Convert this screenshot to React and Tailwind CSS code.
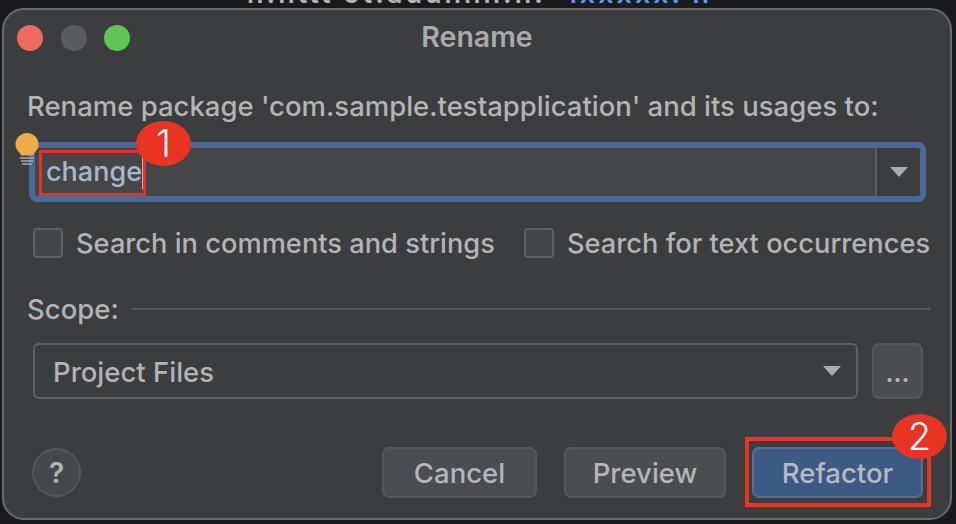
import React from 'react';

const font = "font-['Inter','Liberation_Sans',sans-serif]";

const Caret = () => (
    <svg width="20" height="12" viewBox="0 0 20 12" className="shrink-0">
        <path d="M1 1h18l-9 10z" fill="#a9abaf" />
    </svg>
);

const Bulb = () => (
    <svg width="24" height="33" viewBox="0 0 24 33" className="absolute left-[15px] top-[133px]">
        <path d="M12 0a11.5 11.5 0 0 1 11.5 11.5c0 4-2.2 6.4-4 8.2-.9.9-1.3 1.8-1.5 2.8H6c-.2-1-.6-1.900-1.500-2.800C2.700 17.900.5 15.500.5 11.500A11.500 11.500 0 0 1 12 0z" fill="#edaa45" />
        <path d="M5 25h14M6 28h12M7 31h10" stroke="#a9abaf" strokeWidth="1.500" />
    </svg>
);

const Badge = ({ children, className }) => (
    <div className={`absolute w-[55px] h-[45px] rounded-[50%] bg-[#e93323] text-white text-[38px] leading-[45px] font-light text-center ${className}`}>
        {children}
    </div>
);

const Check = ({ label }) => (
    <label className="flex items-center gap-[13px] h-[30px] leading-[30px] text-[27.25px]">
        <span className="w-[30px] h-[30px] rounded-[4px] border-2 border-[#5f6265] bg-[#424647]" />
        <span className="h-[30px] whitespace-nowrap pt-[1px]">{label}</span>
    </label>
);

const Btn = ({ children, className }) => (
    <button className={`h-[51px] rounded-[7px] border-2 border-[#55585b] bg-[#4b4e50] text-[#b4b6b8] ${className}`}>
        {children}
    </button>
);

const App = () => {
    return (
        <div className={`relative w-[956px] h-[524px] overflow-hidden bg-[#1b1b1d] pt-2 pl-[2px] pr-1 pb-1 text-[27.5px] font-medium text-[#b2b4b6] ${font}`}>
            <div className="absolute top-[-22px] left-[247px] flex w-[465px] justify-between text-[27px] leading-[32px] font-semibold text-[#b5b5b5] tracking-[3px] whitespace-nowrap">
                <span>n.nttt ot.auunnn.n:</span>
                <span className="text-[#5b9bf0]">ixxxxx. n</span>
            </div>

            <div className="relative h-full rounded-[22px] border-2 border-[#6a6b6d] bg-[#3c3d3f]">
                {/* title bar */}
                <div className="grid grid-cols-[1fr_auto_1fr] items-center h-[54px] px-[13px] pt-[1px]">
                    <div className="flex gap-[17.5px]">
                        <span className="w-[26px] h-[26px] rounded-full bg-[#ee6a5f]" />
                        <span className="w-[26px] h-[26px] rounded-full bg-[#5b5c5f]" />
                        <span className="w-[26px] h-[26px] rounded-full bg-[#60c554]" />
                    </div>
                    <div className="font-semibold text-[28.5px] text-[#a8aaac]">Rename</div>
                    <div />
                </div>

                <div className="pl-[23px] pr-[20px]">
                    <div className="mt-[26px] leading-[32px] whitespace-nowrap">Rename package 'com.sample.testapplication' and its usages to:</div>

                    {/* name input */}
                    <div className="flex items-stretch h-[60px] mt-[20px] ml-[2px] mr-[4px] rounded-[8px] border-[6px] border-[#4a6a98] bg-[#454648]">
                        <div className="flex-1 flex items-center pl-[11px] pt-[1px] text-[27px] text-[#a9b7c9]">
                            change<span className="w-[1px] h-[33px] bg-[#a9b7c9]" />
                        </div>
                        <div className="w-[45px] flex items-center justify-center border-l-2 border-[#5d5e60] bg-[#3c3d3f] rounded-r-[4px]">
                            <Caret />
                        </div>
                    </div>

                    <div className="flex items-center mt-[26px] ml-[6px] gap-[29px]">
                        <Check label="Search in comments and strings" />
                        <Check label="Search for text occurrences" />
                    </div>

                    <div className="flex items-center gap-[13px] mt-[35px] leading-[32px]">
                        <span>Scope:</span>
                        <span className="flex-1 h-[2px] bg-[#57585a]" />
                    </div>

                    <div className="flex gap-[14px] mt-[18px] ml-[6px] mr-[7px]">
                        <div className="flex-1 h-[56px] flex items-center justify-between pl-[18px] pr-[14px] rounded-[6px] border-2 border-[#5f6062]">
                            <span className="pt-[3px]">Project Files</span>
                            <Caret />
                        </div>
                        <Btn className="w-[51px] h-[56px] pt-[6px] font-bold text-[24px]">...</Btn>
                    </div>

                    <div className="flex items-center mt-[48px] ml-[5px] mr-[7px]">
                        <div className="w-[49px] h-[49px] rounded-full border-2 border-[#55585b] bg-[#46494b] flex items-center justify-center font-semibold text-[28px]">?</div>
                        <div className="ml-auto flex">
                            <Btn className="w-[155px] mr-[27px] pt-[2px]">Cancel</Btn>
                            <Btn className="w-[162px] mr-[26px] pt-[2px]">Preview</Btn>
                            <button className="w-[171px] h-[51px] pt-[2px] rounded-[7px] border-2 border-[#4f6f9c] bg-[#3d5a85] text-[#b4bac2]">Refactor</button>
                        </div>
                    </div>
                </div>
            </div>

            {/* annotations */}
            <Bulb />
            <div className="absolute left-[39px] top-[150px] w-[107px] h-[46px] border-[3px] border-[#e93323]" />
            <div className="absolute left-[745px] top-[437px] w-[186px] h-[70px] border-4 border-[#e93323]" />
            <Badge className="left-[136px] top-[121px]">1</Badge>
            <Badge className="left-[892px] top-[414px]">2</Badge>
        </div>
    );
};

export default App;
